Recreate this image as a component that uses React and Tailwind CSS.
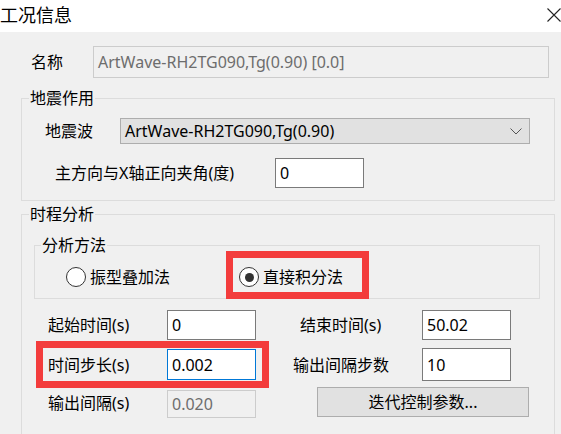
const Radio = ({ checked, label, className = "" }) => (
    <div className={`flex items-center ${className}`}>
        <span className="w-5 h-5 rounded-full border border-[#333] bg-white flex items-center justify-center">
            {checked && <span className="w-[9px] h-[9px] rounded-full bg-[#333]" />}
        </span>
        <span className="ml-[4px] leading-5">{label}</span>
    </div>
);

const TextBox = ({ value, className = "" }) => (
    <div className={`bg-white border border-[#7a7a7a] pl-[4px] flex items-center ${className}`}>{value}</div>
);

const App = () => {
    return (
        <div className="relative w-[561px] h-[434px] overflow-hidden bg-[#f0f0f0] text-black text-[16px] font-['Noto_Sans','Noto_Sans_CJK_SC',sans-serif]">
            {/* title bar */}
            <div className="h-8 bg-white flex items-start justify-between">
                <span className="text-[18px] leading-[28px] font-['Noto_Sans_CJK_SC',sans-serif]">工况信息</span>
                <svg width="14" height="14" viewBox="0 0 14 14" className="mt-[8px] mr-[0px]">
                    <path d="M0.5 0.5 L13.5 13.5 M13.5 0.5 L0.5 13.5" stroke="#222" strokeWidth="1.1" fill="none" />
                </svg>
            </div>

            <div className="pl-[21px] pr-[6px]">
                {/* name */}
                <div className="flex items-center mt-[14px] h-8">
                    <span className="pl-[10px] w-[72px]">名称</span>
                    <div className="w-[456px] h-8 border border-[#cccccc] bg-[#f0f0f0] text-[#6d6d6d] pl-[4px] flex items-center">
                        ArtWave-RH2TG090,Tg(0.90) [0.0]
                    </div>
                </div>

                {/* 地震作用 */}
                <fieldset className="mt-2 h-[115px] border border-[#dcdcdc]">
                    <legend className="ml-[7px] px-[1px] leading-6">地震作用</legend>
                    <div className="flex items-center mt-[8px] h-[26px]">
                        <span className="pl-[23px] w-[98px]">地震波</span>
                        <div className="w-[410px] h-[26px] bg-[#e1e1e1] border border-[#adadad] pl-[4px] pr-[7px] flex items-center justify-between">
                            <span>ArtWave-RH2TG090,Tg(0.90)</span>
                            <svg width="12" height="7" viewBox="0 0 12 7">
                                <path d="M0.5 0.5 L6 6 L11.5 0.5" stroke="#555" strokeWidth="1" fill="none" />
                            </svg>
                        </div>
                    </div>
                    <div className="flex items-center mt-[14px] h-[30px]">
                        <span className="pl-[33px] w-[253px]">主方向与X轴正向夹角(度)</span>
                        <TextBox value="0" className="w-[89px] h-[30px]" />
                    </div>
                </fieldset>

                {/* 时程分析 */}
                <fieldset className="mt-px h-[260px] border border-[#dcdcdc]">
                    <legend className="ml-[7px] px-[1px] leading-6">时程分析</legend>
                    <fieldset className="mt-[7px] ml-[12px] mr-[14px] h-[66px] border border-[#dcdcdc]">
                        <legend className="ml-[6px] px-[1px] leading-6">分析方法</legend>
                        <div className="flex items-center mt-[10px] pl-[31px] h-5">
                            <Radio label="振型叠加法" />
                            <Radio checked label="直接积分法" className="ml-[69px]" />
                        </div>
                    </fieldset>

                    <div className="flex items-center mt-[11px] h-[30px]">
                        <span className="pl-[26px] w-[145px]">起始时间(s)</span>
                        <TextBox value="0" className="w-[89px] h-[30px]" />
                        <span className="pl-[44px] w-[166px]">结束时间(s)</span>
                        <TextBox value="50.02" className="w-[89px] h-[30px]" />
                    </div>

                    <div className="flex items-center mt-[8px] h-[33px]">
                        <span className="pl-[26px] w-[145px]">时间步长(s)</span>
                        <div className="w-[89px] h-[31px] bg-white border border-[#0078d7] pl-[4px] flex items-center">0.002</div>
                        <span className="pl-[37px] w-[166px]">输出间隔步数</span>
                        <TextBox value="10" className="w-[89px] h-[33px]" />
                    </div>

                    <div className="flex items-start mt-[6px] h-[31px]">
                        <span className="pl-[26px] w-[145px] mt-[4px]">输出间隔(s)</span>
                        <div className="mt-[3px] w-[89px] h-[28px] bg-[#f0f0f0] border border-[#cccccc] text-[#6d6d6d] pl-[4px] flex items-center">
                            0.020
                        </div>
                        <button className="ml-[61px] w-[212px] h-[30px] bg-[#e1e1e1] border border-[#adadad] flex items-center justify-center">
                            迭代控制参数...
                        </button>
                    </div>
                </fieldset>
            </div>

            {/* red annotation boxes */}
            <div className="absolute left-[226px] top-[251px] w-[143px] h-[48px] border-[7px] border-[#f33c3c]" />
            <div className="absolute left-[36px] top-[341px] w-[233px] h-[47px] border-[7px] border-[#f33c3c]" />
        </div>
    );
};

export default App;
